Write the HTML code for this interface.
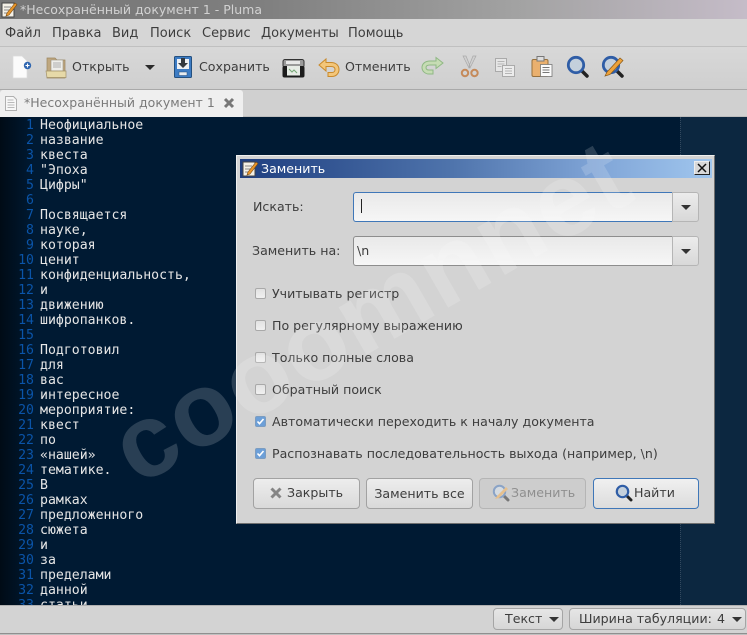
<!DOCTYPE html>
<html><head><meta charset="utf-8"><style>
html,body{margin:0;padding:0}
body{width:747px;height:635px;overflow:hidden;position:relative;background:#d3d3d3;font-family:"DejaVu Sans","Liberation Sans",sans-serif;font-size:12.6px;color:#3d3d3d}
.a{position:absolute;white-space:pre}
.t{font-size:12.6px;line-height:15px}
.m{font-size:13px;line-height:15px}
.ln,.tx{position:absolute;font-family:"DejaVu Sans Mono","Liberation Mono",monospace;font-size:13.2px;line-height:15px;white-space:pre}
.ln{left:0;width:34px;text-align:right;color:#0a54a8;top:118px}
.tx{left:40px;color:#e6e6e6;top:118px}
.cb{position:absolute;left:255px;width:9px;height:9px;border:1px solid #a9a9a9;border-radius:2px;background:linear-gradient(#e2e2e2,#f0f0f0)}
.cb.on{background:#6c9fd8;border-color:#7b9cc0}
.btn{position:absolute;top:478px;height:29px;border:1px solid #a2a2a2;border-radius:4px;background:linear-gradient(#ededed,#d9d9d9);line-height:29px;text-align:center;font-size:12.6px;box-sizing:content-box}
.st{position:absolute;top:608px;height:20px;border:1px solid #a5a5a5;border-radius:4px;background:linear-gradient(#e6e6e6,#d6d6d6);line-height:20px;font-size:12.6px}
.tri{position:absolute;width:0;height:0;border-left:5px solid transparent;border-right:5px solid transparent;border-top:5px solid #333}
.combo{position:absolute;left:353px;height:28px;box-sizing:content-box;background:linear-gradient(#e9e9e9,#f6f6f6)}
.arrow{position:absolute;left:672px;width:27px;background:linear-gradient(#ececec,#d8d8d8);border:1px solid #b5b5b5;border-radius:0 3px 3px 0;box-sizing:border-box}
</style></head><body>

<!-- title bar -->
<div class="a" style="left:0;top:0;width:747px;height:19px;background:linear-gradient(90deg,#757575,#7f7f7f 35%,#a3a3a3 70%,#c5bcc8)"></div>
<svg class="a" style="left:1px;top:1px" width="17" height="17" viewBox="0 0 17 17"><rect x="1" y="2" width="12" height="14" fill="#f4f0e6" stroke="#444"/><path d="M3 6h7M3 9h6M3 12h4" stroke="#888"/><path d="M6 12L14 2l2 1.500L8 14l-3 1z" fill="#e8952a" stroke="#7a4a10" stroke-width=".6"/></svg>
<div class="a" style="left:20px;top:2px;color:#d2d2d2;font-size:12.500px;line-height:15px">*Несохранённый документ 1 - Pluma</div>

<!-- menu -->
<div class="a" style="left:0;top:19px;width:747px;height:27px;background:#d6d6d6;border-bottom:1px solid #c0c0c0"></div>
<div class="a m" style="left:5px;top:26px">Файл</div>
<div class="a m" style="left:52px;top:26px">Правка</div>
<div class="a m" style="left:112px;top:26px">Вид</div>
<div class="a m" style="left:150px;top:26px">Поиск</div>
<div class="a m" style="left:202px;top:26px">Сервис</div>
<div class="a m" style="left:261px;top:26px">Документы</div>
<div class="a m" style="left:348px;top:26px">Помощь</div>

<!-- toolbar -->
<div class="a" style="left:0;top:47px;width:747px;height:42px;background:linear-gradient(#d8d8d8,#cfcfcf);border-bottom:1px solid #a9a9a9"></div>
<svg class="a" style="left:0;top:47px" width="747" height="42" viewBox="0 47 747 42">
 <!-- new -->
 <path d="M13 56h9l5 5v17H13z" fill="#fbfbfb" stroke="#dcdcdc" stroke-width=".7"/>
 <circle cx="27.500" cy="65.500" r="3.700" fill="#2f66b0"/><path d="M25.500 65.500h4M27.500 63.500v4" stroke="#fff" stroke-width="1.100"/>
 <!-- open -->
 <path d="M47 58h8l2 2h8v18H47z" fill="#bfa77f" stroke="#9c8660" stroke-width=".7"/>
 <rect x="51" y="60" width="12" height="11" fill="#eeeeea" stroke="#99917f" stroke-width=".6"/>
 <path d="M53 63h8M53 65h8M53 67h8" stroke="#999" stroke-width=".7"/>
 <path d="M46 71h20l0 6.500H47z" fill="#e6d9a8" stroke="#a3926a" stroke-width=".7"/>
 <!-- drop arrow -->
 <path d="M145 65h10l-5 5z" fill="#2b2b2b"/>
 <!-- save -->
 <rect x="174.500" y="56.500" width="17" height="21" rx="1" fill="#3d7cc4" stroke="#24507f"/>
 <rect x="177" y="59" width="12" height="10" fill="#eef1f4"/>
 <path d="M181 58h4v5h3l-5 5-5-5h3z" fill="#33393f"/>
 <rect x="179" y="72" width="8" height="3.500" fill="#e8ecf0" stroke="#244a7a" stroke-width=".5"/>
 <!-- print -->
 <rect x="283" y="59.500" width="21" height="8" rx="2" fill="#9a9a9a" stroke="#333"/>
 <rect x="286" y="61" width="14" height="3" fill="#e8e8e8"/>
 <rect x="282.500" y="66" width="22" height="11.500" rx="2" fill="#1c1c1c"/>
 <rect x="287" y="66" width="13" height="9.500" fill="#e7ece6"/>
 <path d="M289 69l3 3 2-2 3 3" stroke="#77a877" fill="none"/>
 <!-- undo -->
 <path d="M319 65l7-6v3.500h5c5 0 8 3 8 7s-3 7-7 7h-4v-4h4c2 0 3-1.500 3-3s-1-3-4-3h-5V71z" fill="#f3c67a" stroke="#c98a2c" stroke-width="1"/>
 <!-- redo -->
 <path d="M443 63l-7-5.500v3.500h-6c-5 0-8 3-8 6.500s3 6.500 7 6.500h4v-4h-4c-2 0-3-1-3-2.500s1-2.500 4-2.500h6v3.500z" fill="#c6dcb4" stroke="#8fb884" stroke-width="1"/>
 <!-- cut -->
 <path d="M463 56l6 12 1-2-4-10zM476 56l-6 12-1-2 4-10z" fill="#d0d0d0" stroke="#a8a8a8" stroke-width=".7"/>
 <circle cx="465" cy="73" r="3.200" fill="none" stroke="#c58a5a" stroke-width="2"/><circle cx="474.500" cy="73" r="3.200" fill="none" stroke="#c58a5a" stroke-width="2"/>
 <!-- copy -->
 <rect x="495.500" y="58.500" width="11" height="13" fill="#e6e6e6" stroke="#aaa"/><rect x="502.500" y="65.500" width="12" height="11" fill="#ececec" stroke="#aaa"/>
 <path d="M497.500 61.500h7M497.500 64h7M497.500 66.500h4M505 68.500h7M505 71h7M505 73.500h7" stroke="#b5b5b5"/>
 <!-- paste -->
 <rect x="532" y="59.500" width="16" height="17" rx="1.500" fill="#eab06e" stroke="#96703c"/>
 <rect x="537" y="56.500" width="7" height="4.500" fill="#ddd" stroke="#777"/>
 <rect x="540.500" y="64.500" width="11.500" height="12" fill="#fbfbfb" stroke="#777" stroke-width=".8"/>
 <path d="M542.500 67.500h7M542.500 70h7M542.500 72.500h7" stroke="#777"/>
 <!-- find -->
 <path d="M582 71l5 5" stroke="#222" stroke-width="3.500" stroke-linecap="round"/>
 <circle cx="576" cy="65" r="7.700" fill="#c4d0dc" stroke="#2f5da6" stroke-width="2.800"/>
 <!-- replace -->
 <path d="M617 71l5 5" stroke="#222" stroke-width="3.500" stroke-linecap="round"/>
 <circle cx="611" cy="65" r="7.700" fill="#c4d0dc" stroke="#2f5da6" stroke-width="2.800"/>
 <path d="M605 76l2-4 13-14 3 2.500-13 14z" fill="#eda23a" stroke="#8a5a1a" stroke-width=".7"/>
</svg>
<div class="a t" style="left:72px;top:59px">Открыть</div>
<div class="a t" style="left:199px;top:59px">Сохранить</div>
<div class="a t" style="left:345px;top:59px">Отменить</div>

<!-- tabs -->
<div class="a" style="left:0;top:90px;width:747px;height:26px;background:#d0d0d0;border-bottom:1px solid #bcbcbc"></div>
<div class="a" style="left:0;top:90px;width:243px;height:27px;background:#efefef;border-radius:3px 3px 0 0"></div>
<svg class="a" style="left:5px;top:96px" width="12" height="15" viewBox="0 0 12 15"><path d="M.5.500h8l3 3v11H.5z" fill="#f7f7f7" stroke="#b0b0b0"/><path d="M2.500 4h6M2.500 6.500h7M2.500 9h7M2.500 11.500h7" stroke="#b9b9b9"/></svg>
<div class="a" style="left:24px;top:95px;font-size:12.500px;line-height:15px;color:#7a7a7a">*Несохранённый документ 1</div>
<svg class="a" style="left:223px;top:97px" width="12" height="12" viewBox="0 0 12 12"><path d="M2 2l8 8M10 2l-8 8" stroke="#777" stroke-width="3"/></svg>

<!-- editor -->
<div class="a" style="left:0;top:117px;width:747px;height:488px;background:#001a33;overflow:hidden">
 <div class="a" style="left:0;top:0;width:38px;height:488px;background:linear-gradient(90deg,#000b16,#001a33 34px)"></div>
 <div class="a" style="left:680px;top:0;width:67px;height:488px;background:#0c2740;border-left:1px dotted #33495f;box-sizing:border-box"></div>
</div>
<div style="position:absolute;left:0;top:0;width:747px;height:605px;overflow:hidden">
<div class="ln">1
2
3
4
5
6
7
8
9
10
11
12
13
14
15
16
17
18
19
20
21
22
23
24
25
26
27
28
29
30
31
32
33</div>
<div class="tx">Неофициальное
название
квеста
"Эпоха
Цифры"

Посвящается
науке,
которая
ценит
конфиденциальность,
и
движению
шифропанков.

Подготовил
для
вас
интересное
мероприятие:
квест
по
«нашей»
тематике.
В
рамках
предложенного
сюжета
и
за
пределами
данной
статьи</div>
</div>

<!-- status bar -->
<div class="a" style="left:0;top:605px;width:747px;height:28px;background:#d3d3d3;border-top:1px solid #b0b0b0;box-sizing:border-box"></div>
<div class="a" style="left:0;top:633px;width:747px;height:2px;background:#c0c0c0;border-top:1px solid #8f8f8f;box-sizing:border-box"></div>
<div class="st" style="left:493px;width:68px"><span class="a" style="left:11px;top:0">Текст</span><div class="tri" style="left:55px;top:8px"></div></div>
<div class="st" style="left:569px;width:175px"><span class="a" style="left:9px;top:0">Ширина табуляции:</span><span class="a" style="left:147px;top:0">4</span><div class="tri" style="left:162px;top:8px"></div></div>

<!-- dialog -->
<div class="a" style="left:236px;top:155px;width:479px;height:369px;background:#d3d3d3;border:1px solid #f0f0f0;border-right-color:#6f6f6f;border-bottom-color:#6f6f6f;box-sizing:border-box"></div>
<div class="a" style="left:240px;top:159px;width:472px;height:19px;background:linear-gradient(90deg,#1f3f80,#4f74ac 45%,#7fa4d6 75%,#a0c6ee)"></div>
<svg class="a" style="left:242px;top:160px" width="17" height="17" viewBox="0 0 17 17"><rect x="1" y="2" width="12" height="14" fill="#f4f0e6" stroke="#444"/><path d="M3 6h7M3 9h6M3 12h4" stroke="#888"/><path d="M6 12L14 2l2 1.500L8 14l-3 1z" fill="#e8952a" stroke="#7a4a10" stroke-width=".6"/></svg>
<div class="a t" style="left:261px;top:161px;color:#fff">Заменить</div>
<div class="a" style="left:694px;top:161px;width:16px;height:14px;background:#d8d8d8;border:1px solid #222;border-top-color:#eee;border-left-color:#eee;box-sizing:border-box"></div>
<svg class="a" style="left:694px;top:161px" width="16" height="14" viewBox="0 0 16 14"><path d="M4 3l8 8M12 3l-8 8" stroke="#111" stroke-width="1.500"/></svg>

<div class="a t" style="left:253px;top:199px">Искать:</div>
<div class="combo" style="top:192px;border:1px solid #3f77b8;border-right:0;width:318px;border-radius:3px 0 0 3px"></div>
<div class="a" style="left:361px;top:199px;width:1px;height:14px;background:#222"></div>
<div class="arrow" style="top:192px;height:30px"></div><div class="tri" style="left:681px;top:205px"></div>

<div class="a t" style="left:252px;top:243px">Заменить на:</div>
<div class="combo" style="top:236px;border:1px solid #8d8d8d;border-right:0;width:318px;border-radius:3px 0 0 3px"></div>
<div class="a t" style="left:357px;top:243px">\n</div>
<div class="arrow" style="top:236px;height:30px"></div><div class="tri" style="left:681px;top:249px"></div>

<div class="cb" style="top:288px"></div><div class="a t" style="left:272px;top:286px">Учитывать регистр</div>
<div class="cb" style="top:320px"></div><div class="a t" style="left:272px;top:318px">По регулярному выражению</div>
<div class="cb" style="top:352px"></div><div class="a t" style="left:272px;top:350px">Только полные слова</div>
<div class="cb" style="top:384px"></div><div class="a t" style="left:272px;top:382px">Обратный поиск</div>
<div class="cb on" style="top:416px"></div><svg class="a" style="left:255px;top:416px" width="11" height="11" viewBox="0 0 11 11"><path d="M2.500 5.500l2 2.200 4-4.700" stroke="#fff" stroke-width="1.600" fill="none"/></svg><div class="a t" style="left:272px;top:414px">Автоматически переходить к началу документа</div>
<div class="cb on" style="top:448px"></div><svg class="a" style="left:255px;top:448px" width="11" height="11" viewBox="0 0 11 11"><path d="M2.500 5.500l2 2.200 4-4.700" stroke="#fff" stroke-width="1.600" fill="none"/></svg><div class="a t" style="left:272px;top:446px">Распознавать последовательность выхода (например, \n)</div>

<div class="btn" style="left:253px;width:105px"></div>
<svg class="a" style="left:270px;top:487px" width="12" height="12" viewBox="0 0 12 12"><path d="M1.500 1.500l9 9M10.500 1.500l-9 9" stroke="#858585" stroke-width="3"/></svg>
<div class="a t" style="left:287px;top:485px">Закрыть</div>
<div class="btn" style="left:366px;width:105px;">Заменить все</div>
<div class="btn" style="left:479px;width:105px;background:#cdcdcd;border-color:#b5b5b5"></div>
<svg class="a" style="left:492px;top:484px" width="18" height="18" viewBox="0 0 18 18"><path d="M11 11l5 5" stroke="#777" stroke-width="3" stroke-linecap="round"/><circle cx="7.500" cy="7.500" r="5.700" fill="#d5dbe1" stroke="#8aa3c6" stroke-width="2"/><path d="M3 15l2-3 9-9 2 2-9 9z" fill="#e6c08e"/></svg>
<div class="a t" style="left:511px;top:485px;color:#8f8f8f">Заменить</div>
<div class="btn" style="left:593px;width:104px;border-color:#3f77b8;background:linear-gradient(#f0f0f0,#dcdcdc)"></div>
<svg class="a" style="left:615px;top:484px" width="18" height="18" viewBox="0 0 18 18"><path d="M11 11l5 5" stroke="#222" stroke-width="3" stroke-linecap="round"/><circle cx="7.500" cy="7.500" r="5.700" fill="#c4d0dc" stroke="#2f5da6" stroke-width="2.200"/></svg>
<div class="a t" style="left:634px;top:485px">Найти</div>

<!-- watermark -->
<div class="a" style="left:148px;top:394px;font-family:'Liberation Sans',sans-serif;font-weight:bold;font-size:104px;line-height:110px;color:#fff;opacity:.16;transform:rotate(-30deg);transform-origin:0 100%;letter-spacing:2px;pointer-events:none;">cooomnnet</div>
</body></html>
